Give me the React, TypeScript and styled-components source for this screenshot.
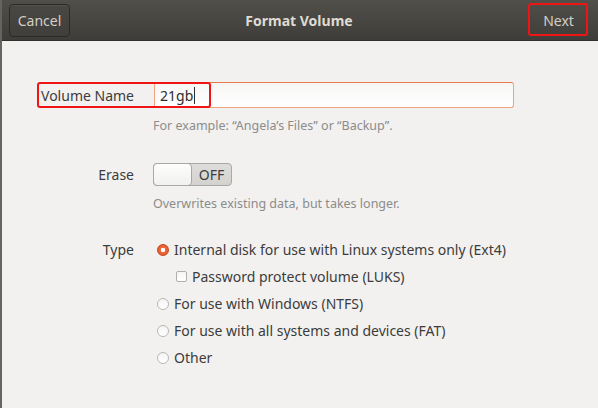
import styled, { createGlobalStyle } from "styled-components";

const GlobalStyle = createGlobalStyle`
  html, body {
    margin: 0;
    padding: 0;
    background: #f2f1f0;
  }
  body {
    font-family: "Noto Sans", "DejaVu Sans", sans-serif;
  }
`;

const Window = styled.div`
  width: 598px;
  height: 408px;
  overflow: hidden;
  background: #f2f1f0;
  border-left: 2px solid #66645f;
  box-sizing: border-box;
`;

const HeaderBar = styled.header`
  height: 41px;
  display: grid;
  grid-template-columns: 1fr auto 1fr;
  align-items: center;
  padding: 0 9px 0 7px;
  background: linear-gradient(#514f4a, #3e3d39);
  border-bottom: 1px solid #2f2e2b;
  box-sizing: border-box;
`;

const Title = styled.div`
  color: #dfdbd2;
  font-weight: 700;
  font-size: 14px;
`;

const HeaderButton = styled.button<{ $flat?: boolean }>`
  height: 33px;
  width: 61px;
  font-family: inherit;
  font-size: 14px;
  color: #d3cfc7;
  border-radius: 4px;
  border: 1px solid ${(p) => (p.$flat ? "transparent" : "#2b2a27")};
  background: ${(p) =>
    p.$flat ? "transparent" : "linear-gradient(#4a4844, #403f3b)"};
  box-shadow: ${(p) =>
    p.$flat ? "none" : "inset 0 1px rgba(255, 255, 255, 0.06)"};
  padding: 0;
`;

const Side = styled.div<{ $end?: boolean }>`
  display: flex;
  justify-content: ${(p) => (p.$end ? "flex-end" : "flex-start")};
`;

const Marked = styled.div`
  position: relative;
  display: inline-flex;
`;

const RedBox = styled.div<{ $l: number; $t: number; $w: number; $h: number }>`
  position: absolute;
  left: ${(p) => p.$l}px;
  top: ${(p) => p.$t}px;
  width: ${(p) => p.$w}px;
  height: ${(p) => p.$h}px;
  border: 2px solid #f01515;
  border-radius: 3px;
  box-sizing: border-box;
  pointer-events: none;
`;

const Form = styled.div`
  display: grid;
  grid-template-columns: 132px 1fr;
  column-gap: 19px;
  padding-top: 41px;
  color: #3c3c3c;
  font-size: 14px;
`;

const Label = styled.div<{ $h: number }>`
  height: ${(p) => p.$h}px;
  display: flex;
  align-items: center;
  justify-content: flex-end;
`;

const Field = styled.div`
  position: relative;
  display: flex;
  flex-direction: column;
`;

const TextInput = styled.div`
  width: 360px;
  height: 26px;
  box-sizing: border-box;
  margin-left: 1px;
  border: 1px solid #f0a37f;
  border-top-color: #e97a4c;
  border-radius: 3px;
  background: linear-gradient(#f6f6f5, #ffffff);
  display: flex;
  align-items: center;
  padding-left: 5px;
  color: #2e2e2e;
`;

const Caret = styled.span`
  display: inline-block;
  width: 1px;
  height: 17px;
  background: #2e2e2e;
  margin-left: 1px;
`;

const Hint = styled.div<{ $mb: number }>`
  color: #8c8c8a;
  font-size: 12.5px;
  margin-top: 9px;
  margin-bottom: ${(p) => p.$mb}px;
`;

const Switch = styled.div`
  width: 79px;
  height: 23px;
  box-sizing: border-box;
  border: 1px solid #a9a8a4;
  border-radius: 4px;
  background: linear-gradient(#dedddb, #d3d2cf);
  display: flex;
  align-items: center;
  position: relative;
`;

const Knob = styled.div`
  width: 39px;
  height: 23px;
  margin: -1px 0 0 -1px;
  box-sizing: border-box;
  border: 1px solid #a9a8a4;
  border-radius: 4px;
  background: linear-gradient(#fdfdfd, #f1f1f0);
`;

const SwitchText = styled.span`
  flex: 1;
  text-align: center;
  font-size: 14px;
  color: #3c3c3c;
`;

const Options = styled.div`
  display: flex;
  flex-direction: column;
`;

const Option = styled.div<{ $indent?: boolean }>`
  height: 27px;
  display: flex;
  align-items: center;
  gap: 5px;
  padding-left: ${(p) => (p.$indent ? 23 : 4)}px;
`;

const Radio = styled.span<{ $on?: boolean }>`
  width: 12px;
  height: 12px;
  border-radius: 50%;
  box-sizing: border-box;
  flex: none;
  border: 1px solid ${(p) => (p.$on ? "#c9441a" : "#b9b8b4")};
  background: ${(p) =>
    p.$on
      ? "radial-gradient(circle, #ffffff 0 2px, #ee6a3c 2.5px, #e0511f)"
      : "linear-gradient(#f4f4f3, #ffffff)"};
`;

const Check = styled.span`
  width: 11px;
  height: 11px;
  border-radius: 2px;
  box-sizing: border-box;
  flex: none;
  border: 1px solid #b0afab;
  background: linear-gradient(#f6f6f5, #ffffff);
`;

export default function App() {
  return (
    <>
      <GlobalStyle />
      <Window>
        <HeaderBar>
          <Side>
            <HeaderButton>Cancel</HeaderButton>
          </Side>
          <Title>Format Volume</Title>
          <Side $end>
            <Marked>
              <HeaderButton $flat>Next</HeaderButton>
              <RedBox $l={0} $t={-1} $w={60} $h={33} />
            </Marked>
          </Side>
        </HeaderBar>

        <Form>
          <Label $h={26}>Volume Name</Label>
          <Field>
            <TextInput>
              21gb
              <Caret />
            </TextInput>
            <RedBox $l={-116} $t={0} $w={174} $h={26} />
            <Hint $mb={29}>For example: “Angela’s Files” or “Backup”.</Hint>
          </Field>

          <Label $h={23}>Erase</Label>
          <Field>
            <Switch>
              <Knob />
              <SwitchText>OFF</SwitchText>
            </Switch>
            <Hint $mb={24}>Overwrites existing data, but takes longer.</Hint>
          </Field>

          <Label $h={27}>Type</Label>
          <Options>
            <Option>
              <Radio $on />
              Internal disk for use with Linux systems only (Ext4)
            </Option>
            <Option $indent>
              <Check />
              Password protect volume (LUKS)
            </Option>
            <Option>
              <Radio />
              For use with Windows (NTFS)
            </Option>
            <Option>
              <Radio />
              For use with all systems and devices (FAT)
            </Option>
            <Option>
              <Radio />
              Other
            </Option>
          </Options>
        </Form>
      </Window>
    </>
  );
}
